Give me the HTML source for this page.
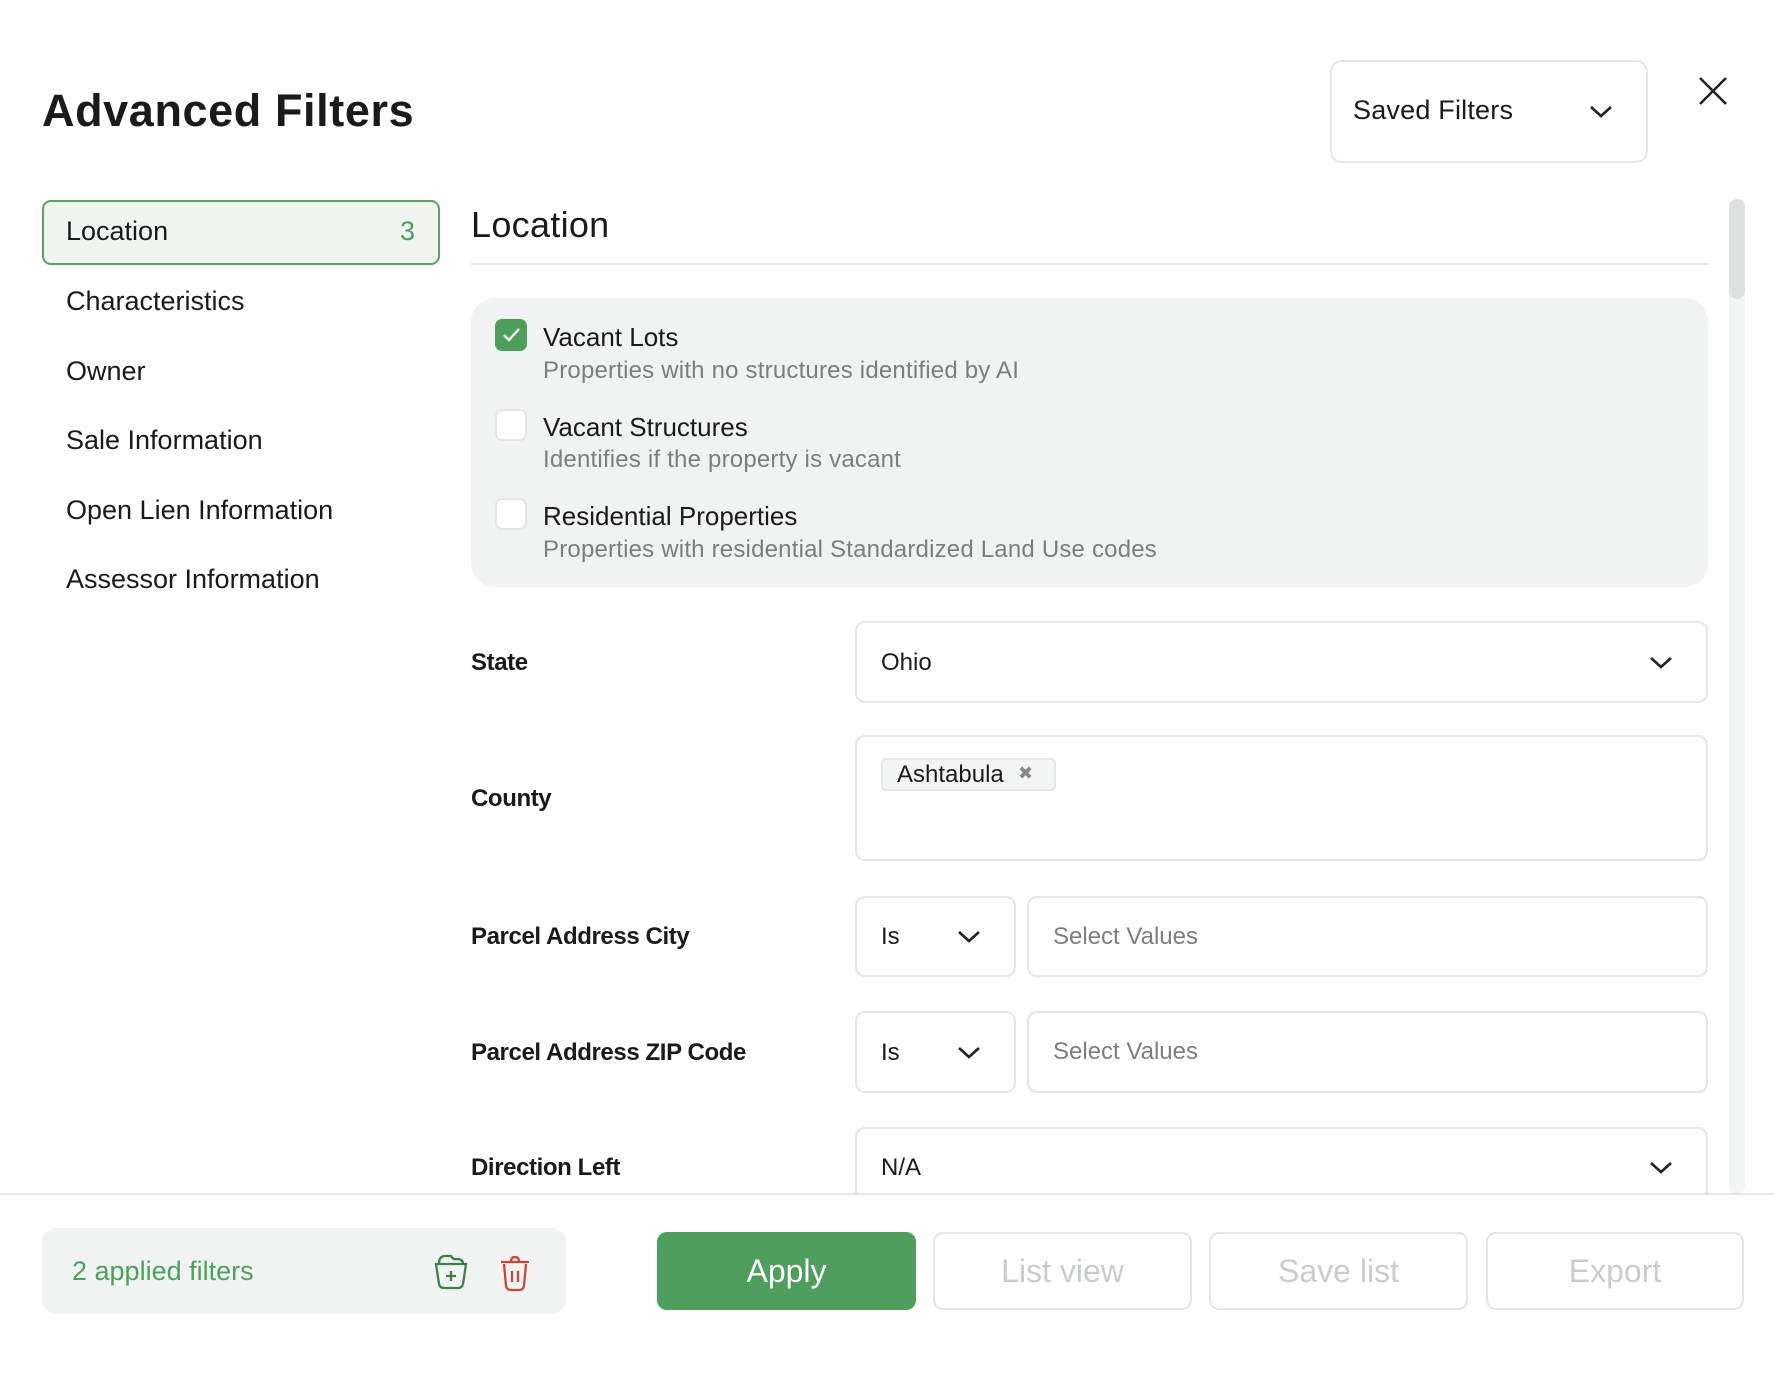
<!DOCTYPE html>
<html><head><meta charset="utf-8"><style>
*{box-sizing:border-box;margin:0;padding:0}
body{width:1774px;height:1387px;background:#fff;font-family:"Liberation Sans",sans-serif;color:#1a1a1a;position:relative;overflow:hidden}
.a{position:absolute}
.t{position:absolute;white-space:nowrap;line-height:1}
.box{position:absolute;border:2px solid #e3e6e4;border-radius:10px;background:#fff}
.chev{position:absolute;width:26px;height:16px}
.cb{position:absolute;left:495px;width:32px;height:32px;border-radius:7px;border:2px solid #e3e6e4;background:#fff}
.btn{position:absolute;top:1232px;height:78px;border:2px solid #e3e6e4;border-radius:10px;color:#c9cdca;font-size:32px;display:flex;align-items:center;justify-content:center}
.lb{font-size:24px;font-weight:bold;letter-spacing:-0.4px}
.d{font-size:24px;color:#7b7f7c;letter-spacing:0.2px}
</style></head><body>
<div class="t" style="left:42px;top:88px;font-size:45px;font-weight:bold;letter-spacing:0.6px">Advanced Filters</div>
<div class="box" style="left:1330px;top:60px;width:318px;height:103px;border-radius:12px"></div>
<div class="t" style="left:1353px;top:97px;font-size:27px;letter-spacing:0.2px">Saved Filters</div>
<svg class="chev" style="left:1588px;top:103px" viewBox="0 0 26 16"><path d="M3 4l10 9 10-9" fill="none" stroke="#222" stroke-width="2.6"/></svg>
<svg class="a" style="left:1698px;top:76px" width="30" height="30" viewBox="0 0 30 30"><path d="M2 2L28 28M28 2L2 28" stroke="#222" stroke-width="2.6"/></svg>

<div class="a" style="left:42px;top:200px;width:398px;height:65px;border:2px solid #56a363;border-radius:9px;background:#f0f4f1"></div>
<div class="t" style="left:66px;top:218px;font-size:27px">Location</div>
<div class="t" style="left:400px;top:218px;font-size:27px;color:#4f9f5c">3</div>
<div class="t" style="left:66px;top:288px;font-size:27px">Characteristics</div>
<div class="t" style="left:66px;top:358px;font-size:27px">Owner</div>
<div class="t" style="left:66px;top:427px;font-size:27px">Sale Information</div>
<div class="t" style="left:66px;top:497px;font-size:27px">Open Lien Information</div>
<div class="t" style="left:66px;top:566px;font-size:27px">Assessor Information</div>

<div class="t" style="left:471px;top:207px;font-size:36px;letter-spacing:0.3px">Location</div>
<div class="a" style="left:471px;top:263px;width:1237px;height:2px;background:#e3e6e4"></div>
<div class="a" style="left:1729px;top:199px;width:16px;height:995px;background:#f3f5f4;border-radius:8px"></div>
<div class="a" style="left:1729px;top:199px;width:16px;height:100px;background:#dde0de;border-radius:8px"></div>

<div class="a" style="left:471px;top:298px;width:1237px;height:289px;background:#f0f3f1;border-radius:24px"></div>
<div class="cb" style="top:319px;background:#4f9f5c;border-color:#4f9f5c"><svg width="28" height="28" viewBox="0 0 28 28"><path d="M7 14l5 5 10-11" fill="none" stroke="#fff" stroke-width="2.4"/></svg></div>
<div class="t" style="left:543px;top:324px;font-size:26px">Vacant Lots</div>
<div class="t d" style="left:543px;top:359px">Properties with no structures identified by AI</div>
<div class="cb" style="top:409px"></div>
<div class="t" style="left:543px;top:414px;font-size:26px">Vacant Structures</div>
<div class="t d" style="left:543px;top:448px">Identifies if the property is vacant</div>
<div class="cb" style="top:498px"></div>
<div class="t" style="left:543px;top:503px;font-size:26px">Residential Properties</div>
<div class="t d" style="left:543px;top:538px">Properties with residential Standardized Land Use codes</div>

<div class="t lb" style="left:471px;top:651px">State</div>
<div class="box" style="left:855px;top:621px;width:853px;height:82px"></div>
<div class="t" style="left:881px;top:651px;font-size:24px">Ohio</div>
<svg class="chev" style="left:1648px;top:654px" viewBox="0 0 26 16"><path d="M3 4l10 9 10-9" fill="none" stroke="#222" stroke-width="2.6"/></svg>

<div class="t lb" style="left:471px;top:787px">County</div>
<div class="box" style="left:855px;top:735px;width:853px;height:126px"></div>
<div class="a" style="left:881px;top:758px;width:175px;height:33px;border:2px solid #e3e6e4;border-radius:5px;background:#f3f5f4"></div>
<div class="t" style="left:897px;top:763px;font-size:24px">Ashtabula</div>
<div class="t" style="left:1018px;top:764px;font-size:18px;color:#888">✖</div>

<div class="t lb" style="left:471px;top:925px">Parcel Address City</div>
<div class="box" style="left:855px;top:896px;width:161px;height:81px"></div>
<div class="t" style="left:881px;top:925px;font-size:24px">Is</div>
<svg class="chev" style="left:956px;top:928px" viewBox="0 0 26 16"><path d="M3 4l10 9 10-9" fill="none" stroke="#222" stroke-width="2.6"/></svg>
<div class="box" style="left:1027px;top:896px;width:681px;height:81px"></div>
<div class="t" style="left:1053px;top:925px;font-size:24px;color:#7b7f7c">Select Values</div>

<div class="t lb" style="left:471px;top:1041px">Parcel Address ZIP Code</div>
<div class="box" style="left:855px;top:1011px;width:161px;height:82px"></div>
<div class="t" style="left:881px;top:1041px;font-size:24px">Is</div>
<svg class="chev" style="left:956px;top:1044px" viewBox="0 0 26 16"><path d="M3 4l10 9 10-9" fill="none" stroke="#222" stroke-width="2.6"/></svg>
<div class="box" style="left:1027px;top:1011px;width:681px;height:82px"></div>
<div class="t" style="left:1053px;top:1040px;font-size:24px;color:#7b7f7c">Select Values</div>

<div class="t lb" style="left:471px;top:1156px">Direction Left</div>
<div class="box" style="left:855px;top:1127px;width:853px;height:100px"></div>
<div class="t" style="left:881px;top:1156px;font-size:24px">N/A</div>
<svg class="chev" style="left:1648px;top:1159px" viewBox="0 0 26 16"><path d="M3 4l10 9 10-9" fill="none" stroke="#222" stroke-width="2.6"/></svg>

<div class="a" style="left:0;top:1193px;width:1774px;height:194px;background:#fff;border-top:2px solid #e3e6e4"></div>
<div class="a" style="left:42px;top:1228px;width:524px;height:86px;background:#f0f3f1;border-radius:14px"></div>
<div class="t" style="left:72px;top:1258px;font-size:27px;color:#4f9f5c">2 applied filters</div>
<svg class="a" style="left:431px;top:1252px" width="40" height="40" viewBox="0 0 40 40"><path d="M5 12h30l-3 20q-1 4-5 4H13q-4 0-5-4z M8 12q0-8 6-8h6q2 4 6 3q6 0 6 5" fill="none" stroke="#3d7f4a" stroke-width="2.3"/><path d="M20 19v10M15 24h10" stroke="#3d7f4a" stroke-width="2.3"/></svg>
<svg class="a" style="left:497px;top:1252px" width="36" height="40" viewBox="0 0 36 40"><path d="M4 10h28M14 10q0-5 4-5t4 5M7 12l2 22q1 4 5 4h8q4 0 5-4l2-22M15 19v11M21 19v11" fill="none" stroke="#c9453c" stroke-width="2.3"/></svg>
<div class="btn" style="left:657px;width:259px;background:#4f9f5c;border-color:#4f9f5c;color:#fff">Apply</div>
<div class="btn" style="left:933px;width:259px">List view</div>
<div class="btn" style="left:1209px;width:259px">Save list</div>
<div class="btn" style="left:1486px;width:258px">Export</div>
</body></html>
